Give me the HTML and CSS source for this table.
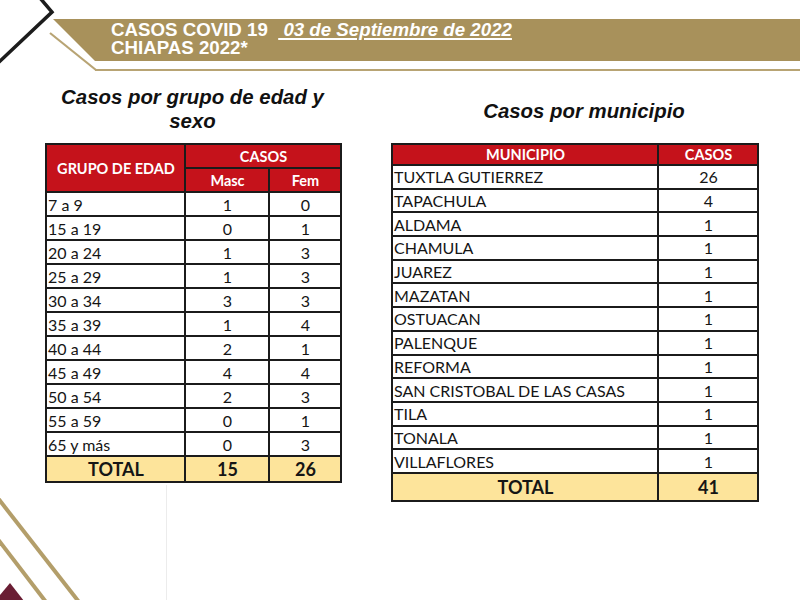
FILE: index.html
```html
<!DOCTYPE html>
<html lang="es">
<head>
<meta charset="utf-8">
<title>Casos COVID 19 Chiapas</title>
<link rel="stylesheet" href="styles.css">
</head>
<body>
<div class="page">
  <svg class="deco-top" width="100" height="75" viewBox="0 0 100 75">
    <polyline points="-2,63 52,12 40,-2" fill="none" stroke="#1c1c1c" stroke-width="3.5"/>
    <polyline points="50,33 96,70" fill="none" stroke="#b8a474" stroke-width="2.2"/>
  </svg>
  <header class="band">
    <div class="title">
      <div class="line"><span class="t1">CASOS COVID 19&nbsp;&nbsp;</span><span class="date">&nbsp;03 de Septiembre de 2022</span></div>
      <div class="line">CHIAPAS 2022*</div>
    </div>
  </header>
  <div class="rule"></div>

  <main class="content">
    <section class="col col-left">
      <h2 class="heading">Casos por grupo de edad y<br>sexo</h2>
      <table class="tbl tbl-age">
        <colgroup><col class="c-age"><col class="c-m"><col class="c-f"></colgroup>
        <thead>
          <tr><th rowspan="2" class="h-big">GRUPO DE EDAD</th><th colspan="2">CASOS</th></tr>
          <tr><th>Masc</th><th>Fem</th></tr>
        </thead>
        <tbody>
          <tr><td>7 a 9</td><td class="n">1</td><td class="n">0</td></tr>
          <tr><td>15 a 19</td><td class="n">0</td><td class="n">1</td></tr>
          <tr><td>20 a 24</td><td class="n">1</td><td class="n">3</td></tr>
          <tr><td>25 a 29</td><td class="n">1</td><td class="n">3</td></tr>
          <tr><td>30 a 34</td><td class="n">3</td><td class="n">3</td></tr>
          <tr><td>35 a 39</td><td class="n">1</td><td class="n">4</td></tr>
          <tr><td>40 a 44</td><td class="n">2</td><td class="n">1</td></tr>
          <tr><td>45 a 49</td><td class="n">4</td><td class="n">4</td></tr>
          <tr><td>50 a 54</td><td class="n">2</td><td class="n">3</td></tr>
          <tr><td>55 a 59</td><td class="n">0</td><td class="n">1</td></tr>
          <tr><td>65 y más</td><td class="n">0</td><td class="n">3</td></tr>
          <tr class="total"><td>TOTAL</td><td>15</td><td>26</td></tr>
        </tbody>
      </table>
    </section>

    <section class="col col-right">
      <h2 class="heading heading-right">Casos por municipio</h2>
      <table class="tbl tbl-mun">
        <colgroup><col class="c-mun"><col class="c-cas"></colgroup>
        <thead>
          <tr><th>MUNICIPIO</th><th>CASOS</th></tr>
        </thead>
        <tbody>
          <tr><td>TUXTLA GUTIERREZ</td><td class="n">26</td></tr>
          <tr><td>TAPACHULA</td><td class="n">4</td></tr>
          <tr><td>ALDAMA</td><td class="n">1</td></tr>
          <tr><td>CHAMULA</td><td class="n">1</td></tr>
          <tr><td>JUAREZ</td><td class="n">1</td></tr>
          <tr><td>MAZATAN</td><td class="n">1</td></tr>
          <tr><td>OSTUACAN</td><td class="n">1</td></tr>
          <tr><td>PALENQUE</td><td class="n">1</td></tr>
          <tr><td>REFORMA</td><td class="n">1</td></tr>
          <tr><td>SAN CRISTOBAL DE LAS CASAS</td><td class="n">1</td></tr>
          <tr><td>TILA</td><td class="n">1</td></tr>
          <tr><td>TONALA</td><td class="n">1</td></tr>
          <tr><td>VILLAFLORES</td><td class="n">1</td></tr>
          <tr class="total"><td>TOTAL</td><td>41</td></tr>
        </tbody>
      </table>
    </section>
  </main>

  <svg class="deco-bottom" width="170" height="120" viewBox="0 0 170 120">
    <line x1="166.5" y1="5" x2="166.5" y2="120" stroke="#ececec" stroke-width="1"/>
    <line x1="-3" y1="17" x2="79" y2="122" stroke="#b39e6a" stroke-width="4"/>
    <line x1="-3" y1="58" x2="46" y2="122" stroke="#b39e6a" stroke-width="4"/>
    <polygon points="0,115 10,103 24,121 0,121" fill="#6a1e34"/>
  </svg>
</div>
</body>
</html>
```

FILE: styles.css
```css
html, body {
  margin: 0;
  padding: 0;
  background: #ffffff;
}

.page {
  position: relative;
  width: 800px;
  height: 600px;
  overflow: hidden;
  font-family: "Liberation Sans", Arial, sans-serif;
  color: #111;
}

.deco-top {
  position: absolute;
  left: 0;
  top: 0;
}

.deco-bottom {
  position: absolute;
  left: 0;
  bottom: 0;
}

.band {
  margin: 19px 0 0 53px;
  height: 42px;
  background: #a8915b;
  clip-path: polygon(0 0, 100% 0, 100% 100%, 42px 100%);
}

.title {
  padding: 2px 0 0 58px;
  font-size: 18.7px;
  line-height: 18px;
  font-weight: bold;
  color: #ffffff;
  white-space: nowrap;
}

.title .line {
  height: 18px;
}

.date {
  font-style: italic;
  text-decoration: underline;
  text-decoration-thickness: 1.5px;
  text-underline-offset: 2px;
}

.rule {
  margin: 8px 0 0 95px;
  height: 2px;
  background: #b8a474;
}

.content {
  display: flex;
  gap: 51px;
  padding: 14px 0 0 45px;
}

.col {
  display: flex;
  flex-direction: column;
}

.col-left { width: 295px; }
.col-right { width: 366px; }

.heading {
  margin: 0 0 10px 0;
  height: 48px;
  font-size: 20.4px;
  line-height: 24px;
  font-weight: bold;
  font-style: italic;
  text-align: center;
  color: #111;
}

.heading-right {
  box-sizing: border-box;
  padding: 14px 0 0 20px;
}

.tbl {
  border-collapse: collapse;
  table-layout: fixed;
  font-family: Lato, "Noto Sans", sans-serif;
  font-size: 16px;
  color: #151515;
}

.tbl-age { width: 295px; }
.tbl-mun { width: 366px; }

.c-age { width: 139px; }
.c-m { width: 84px; }
.c-f { width: 72px; }
.c-mun { width: 266px; }
.c-cas { width: 100px; }

.tbl th,
.tbl td {
  border: 2px solid #1b1b1b;
  padding: 0 0 0 1px;
  white-space: nowrap;
  overflow: hidden;
}

.tbl th {
  background: #c5121b;
  color: #ffffff;
  font-weight: bold;
  font-size: 14.5px;
  text-align: center;
}

.tbl-age tr { height: 24px; }
.tbl-mun thead tr { height: 21px; }
.tbl-mun tbody tr { height: 23.7px; }

.tbl td.n { text-align: center; }

.tbl tr.total td {
  background: #fde49b;
  font-weight: bold;
  font-size: 18px;
  text-align: center;
}

.tbl-age tr.total { height: 26px; }
.tbl-mun tbody tr.total { height: 28px; }
```
